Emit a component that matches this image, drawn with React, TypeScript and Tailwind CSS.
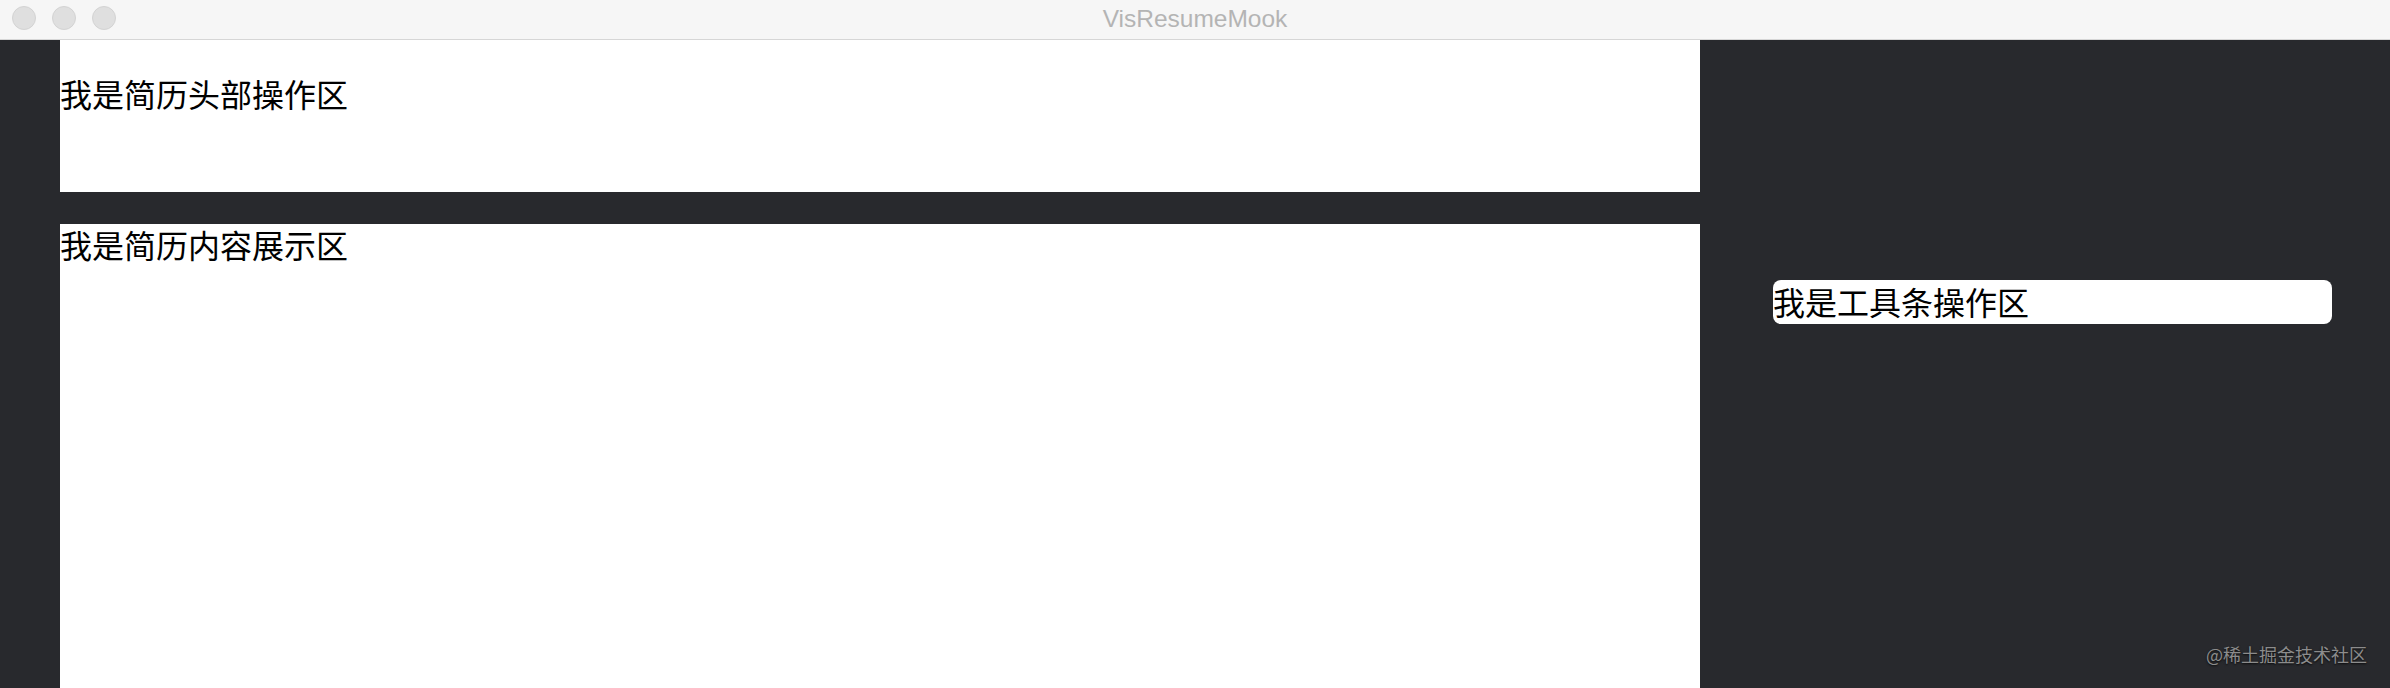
export default function App() {
  return (
    <div className="relative flex h-[688px] w-full flex-col overflow-hidden bg-[#28292d] font-['Noto_Sans_CJK_SC','Noto_Sans',sans-serif]">
      {/* window title bar */}
      <div className="relative flex h-[40px] shrink-0 items-center justify-center border-b border-[#d6d6d6] bg-[#f6f6f6]">
        <div className="absolute left-[12px] top-[6px] flex gap-[16px]">
          <span className="h-[24px] w-[24px] rounded-full border border-[#d3d3d3] bg-[#dfdfdf]" />
          <span className="h-[24px] w-[24px] rounded-full border border-[#d3d3d3] bg-[#dfdfdf]" />
          <span className="h-[24px] w-[24px] rounded-full border border-[#d3d3d3] bg-[#dfdfdf]" />
        </div>
        <span className="font-['Liberation_Sans',sans-serif] text-[24.5px] leading-none text-[#b4b4b4]">VisResumeMook</span>
      </div>

      <div className="flex flex-1">
        <div className="w-[60px] shrink-0" />

        {/* resume */}
        <div className="flex w-[1640px] shrink-0 flex-col">
          <div className="h-[152px] bg-white pt-[37px] text-[32px] leading-[32px] text-black">我是简历头部操作区</div>
          <div className="mt-[32px] flex-1 bg-white pt-[4px] text-[32px] leading-[32px] text-black">我是简历内容展示区</div>
        </div>

        {/* toolbar */}
        <div className="flex-1 pl-[73px] pt-[240px]">
          <div className="flex h-[44px] w-[559px] items-center rounded-lg bg-white pb-[3px] text-[32px] leading-[32px] text-black">
            我是工具条操作区
          </div>
        </div>
      </div>

      <div className="absolute bottom-[25px] right-[23px] text-[18px] leading-none text-[#8c8c8c] [text-shadow:0_1px_2px_rgba(0,0,0,0.8)]">
        @稀土掘金技术社区
      </div>
    </div>
  );
}
